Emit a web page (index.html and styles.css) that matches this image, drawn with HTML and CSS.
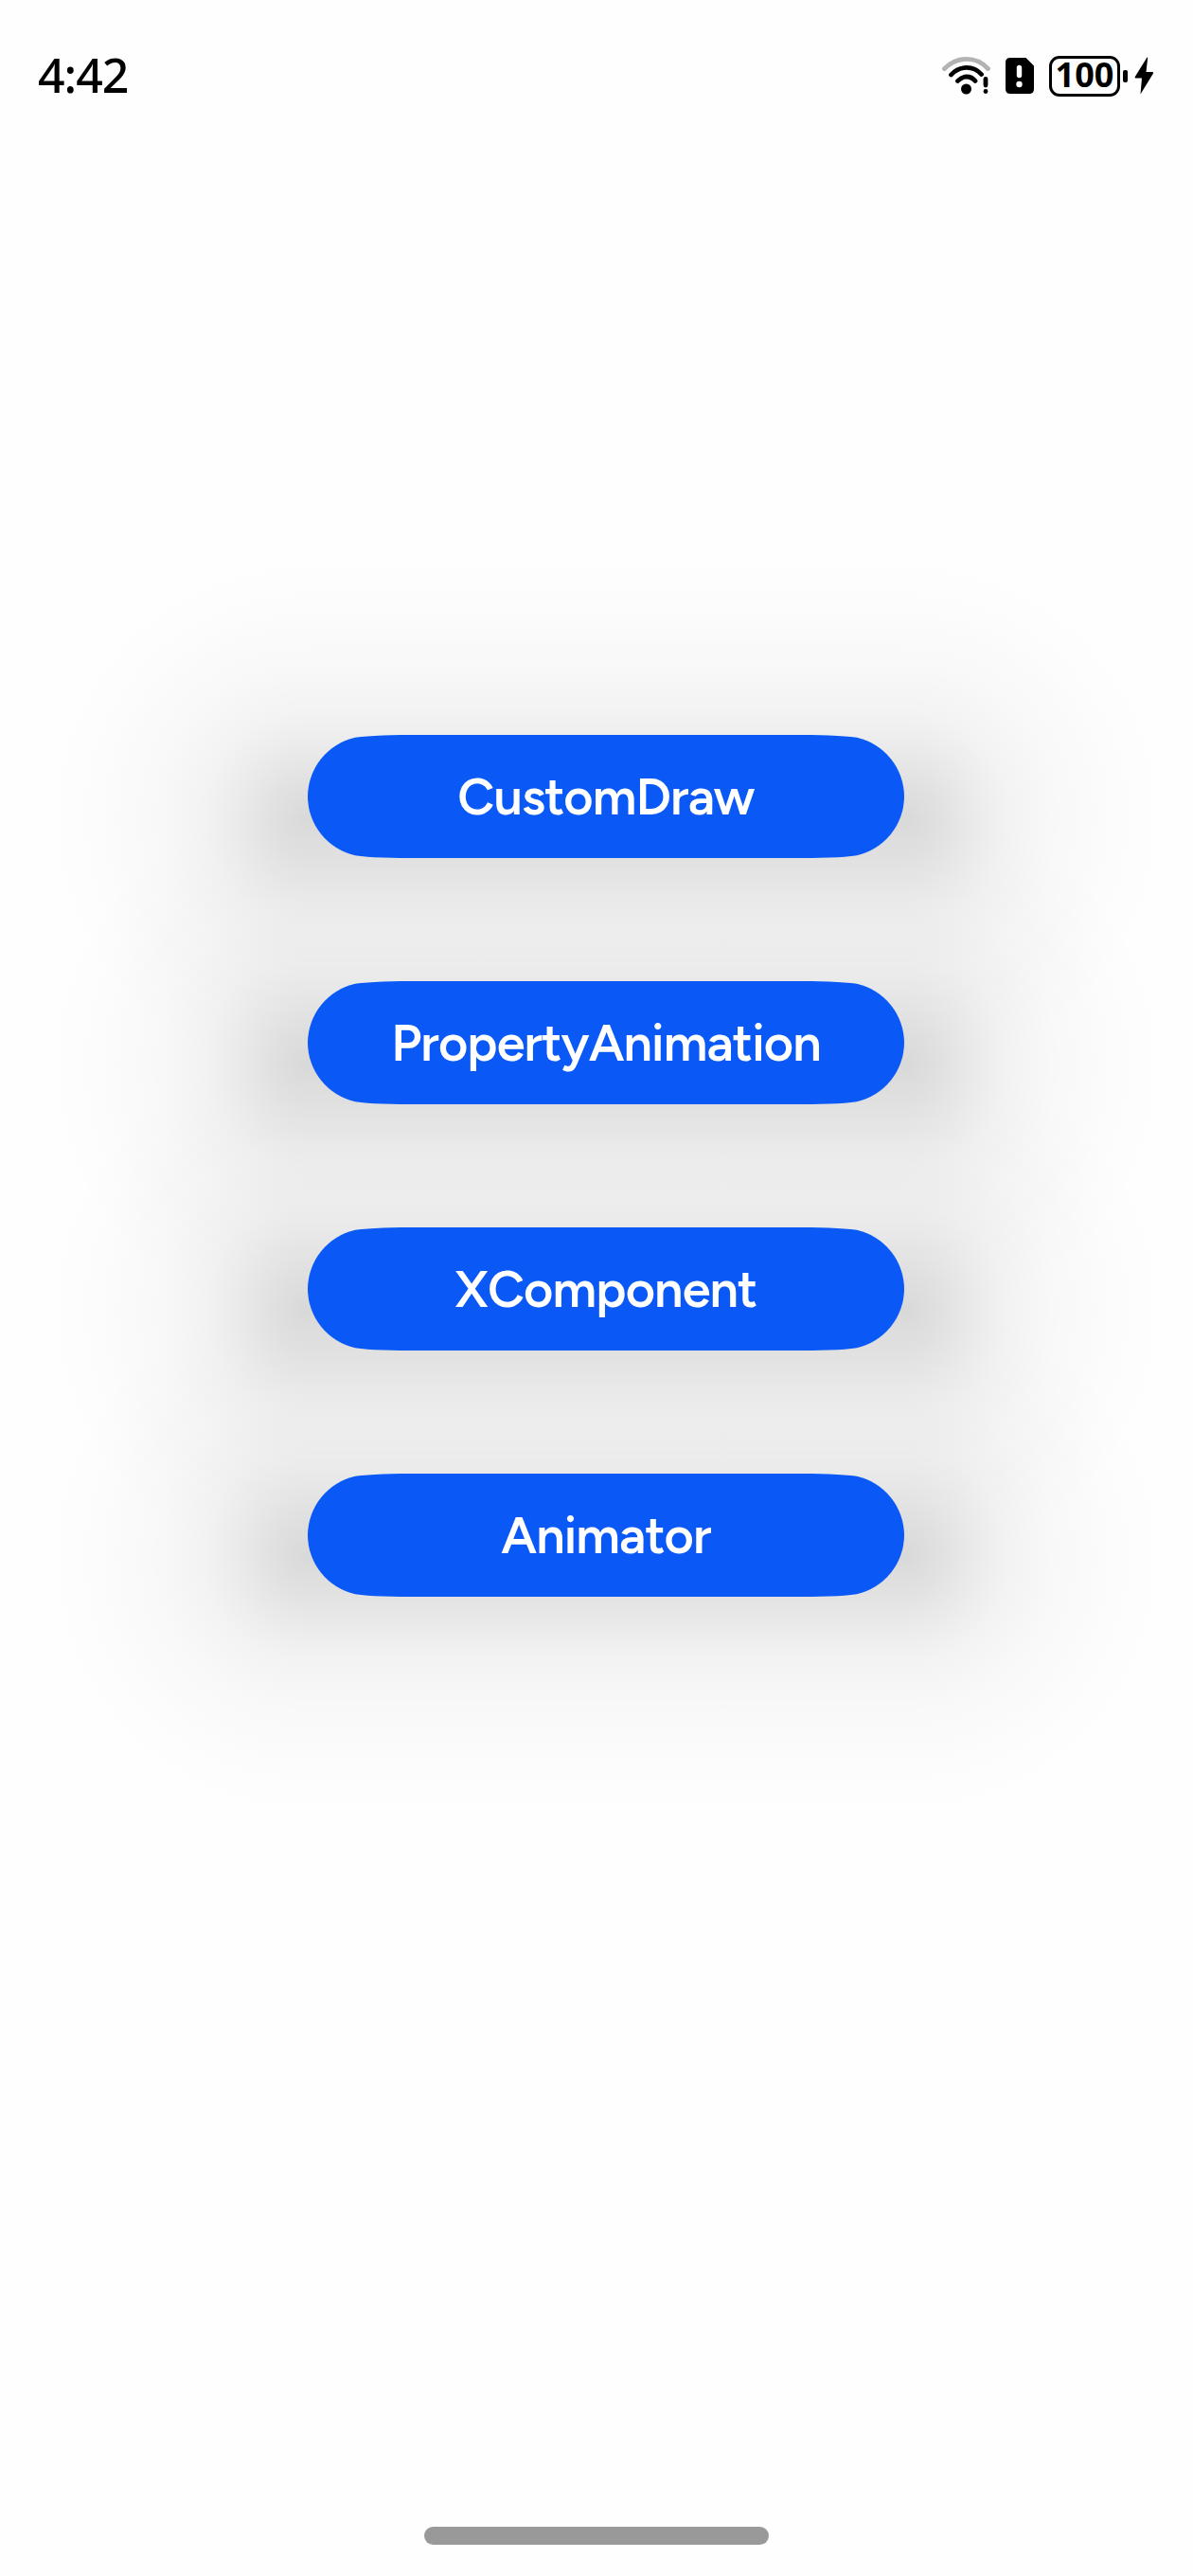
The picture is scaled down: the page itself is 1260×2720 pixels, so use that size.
FILE: index.html
```html
<!DOCTYPE html>
<html lang="en">
<head>
<meta charset="utf-8">
<title>Animation samples</title>
<link rel="stylesheet" href="styles.css">
</head>
<body>
<div class="screen">
  <header class="status-bar">
    <span class="clock">4:42</span>
    <div class="status-icons">
      <svg class="wifi" viewBox="0 0 52 42" aria-hidden="true">
        <g fill="none" stroke="#000" stroke-width="4.8" stroke-linecap="round">
          <path d="M2.500 13.500C16 0 36 0 48.500 13.500" stroke="#b3b3b3"/>
          <path d="M9.500 20C18.500 10 33 10 41.500 19.500"/>
          <path d="M16.500 26.500C22 20.500 30 20.500 35 26.500"/>
          <path d="M46 24.500V31"/>
        </g>
        <circle cx="25.500" cy="35" r="5.500"/>
        <circle cx="46" cy="37.500" r="2.400"/>
      </svg>
      <svg class="sim" viewBox="0 0 30 38" aria-hidden="true">
        <path d="M5 0H21.500L30 8.500V33Q30 38 25 38H5Q0 38 0 33V5Q0 0 5 0Z"/>
        <path d="M14.500 10.500V18.500" stroke="#fff" stroke-width="5.400" stroke-linecap="round"/>
        <circle cx="14.500" cy="28" r="3.200" fill="#fff"/>
      </svg>
      <div class="battery"><span class="battery-level">100</span></div>
      <span class="battery-tip"></span>
      <svg class="bolt" viewBox="0 0 21 40" aria-hidden="true">
        <path d="M13.500 0.500L0.800 21Q0 22.500 1.500 22.500H8L6.500 39.500L20 17.500Q20.800 16 19 16H12.500L14.200 1Z"/>
      </svg>
    </div>
  </header>
  <main class="menu">
    <button class="menu-button">CustomDraw</button>
    <button class="menu-button">PropertyAnimation</button>
    <button class="menu-button">XComponent</button>
    <button class="menu-button">Animator</button>
  </main>
  <footer class="nav"><span class="nav-handle"></span></footer>
</div>
</body>
</html>
```
FILE: styles.css
```css
* { box-sizing: border-box; }
body { margin: 0; background: #fefefe; }
.screen {
  width: 1260px;
  height: 2720px;
  display: flex;
  flex-direction: column;
  overflow: hidden;
  font-family: "Lato", "Liberation Sans", sans-serif;
}
.status-bar {
  flex: none;
  height: 160px;
  padding: 0 41px 0 40px;
  display: flex;
  align-items: center;
  justify-content: space-between;
  color: #000;
}
.clock {
  padding-bottom: 2px;
  font-family: "Noto Sans", sans-serif;
  font-size: 50px;
  font-weight: 500;
  letter-spacing: -1px;
}
.status-icons { display: flex; align-items: center; }
.wifi { width: 52px; height: 42px; }
.sim { width: 30px; height: 38px; margin-left: 15px; }
.battery {
  width: 75px;
  height: 43px;
  margin-left: 16px;
  border: 3px solid #000;
  border-radius: 11px;
  display: flex;
  align-items: center;
  justify-content: center;
}
.battery-level {
  padding-bottom: 2px;
  font: 700 36px/36px "Noto Sans", sans-serif;
}
.battery-tip {
  width: 5px;
  height: 13px;
  margin-left: 3px;
  border-radius: 2px;
  background: #000;
}
.bolt { width: 21px; height: 40px; margin-left: 7px; }
.menu {
  flex: 1;
  padding: 616px 305px 0 325px;
  display: flex;
  flex-direction: column;
  gap: 130px;
  isolation: isolate;
}
.menu-button {
  position: relative;
  flex: none;
  width: 630px;
  height: 130px;
  padding: 1px 0 0;
  border: 0;
  background: none;
  color: #fff;
  font: 600 54px/129px "Figtree", "Lato", sans-serif;
  letter-spacing: -.9px;
}
/* Pill with continuous-curvature ends. */
.menu-button::after {
  content: "";
  position: absolute;
  z-index: -1;
  inset: 0;
  background: #0a59f7;
  clip-path: path("M120 0C90 0 65 .5 50 2.800A64 64 0 0 0 0 65A64 64 0 0 0 50 127.200C65 129.500 90 130 120 130H510C540 130 565 129.500 580 127.200A64 64 0 0 0 630 65A64 64 0 0 0 580 2.800C565 .5 540 0 510 0Z");
}
/* Soft glow: straight band in the middle, round falloff at both ends. */
.menu-button::before {
  --falloff: rgba(0,0,0,.145) 0, rgba(0,0,0,.135) 5%, rgba(0,0,0,.122) 10%, rgba(0,0,0,.108) 15%, rgba(0,0,0,.094) 20%, rgba(0,0,0,.066) 30%, rgba(0,0,0,.045) 40%, rgba(0,0,0,.031) 50%, rgba(0,0,0,.021) 60%, rgba(0,0,0,.014) 70%, rgba(0,0,0,.008) 80%, rgba(0,0,0,.003) 90%, transparent 100%;
  content: "";
  position: absolute;
  z-index: -2;
  inset: -193px -280px -237px;
  background:
    radial-gradient(circle 280px at 100% 50%, var(--falloff)) 0 0 / 280px 100% no-repeat,
    radial-gradient(circle 280px at 0 50%, var(--falloff)) 100% 0 / 280px 100% no-repeat,
    linear-gradient(to top, var(--falloff)) 280px 0 / 630px 50% no-repeat,
    linear-gradient(to bottom, var(--falloff)) 280px 100% / 630px 50% no-repeat;
}
.nav {
  flex: none;
  height: 52px;
  display: flex;
  justify-content: center;
}
.nav-handle {
  width: 364px;
  height: 19px;
  border-radius: 10px;
  background: #999;
}
```
